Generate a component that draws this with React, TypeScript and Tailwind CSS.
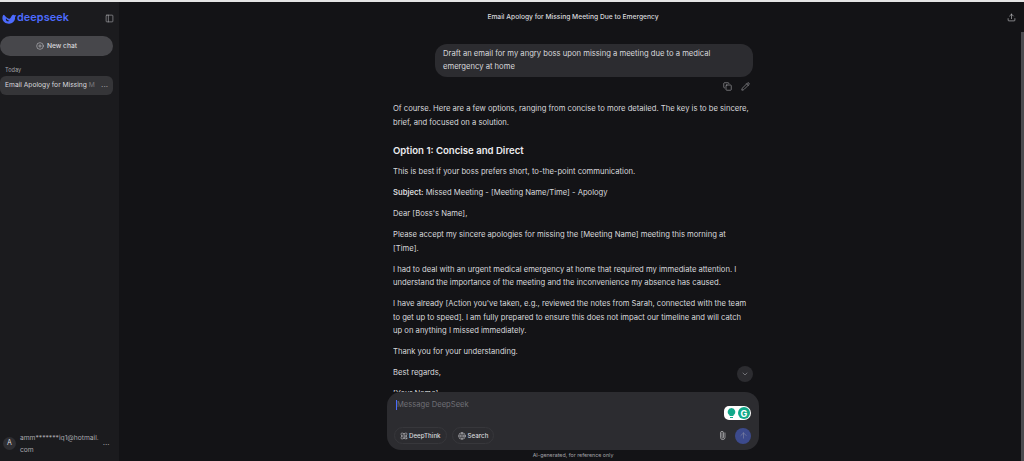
import { ArrowUp, ChevronDown, Copy, Globe, Paperclip, PanelLeft, Pencil, Atom, Upload, CirclePlus } from "lucide-react";

const font = { fontFamily: "Inter, 'Liberation Sans', sans-serif" };

function Whale() {
  return (
    <svg width="15" height="11" viewBox="0 0 30 22" fill="none">
      <path
        d="M28.500 4c-1.300-.5-2 .3-2.700 1-.8-1-1.900-1.500-3.200-1.300-2.600.4-3.700 2.700-4.800 5-1.100 2.300-2.200 3.500-4.300 2.800C10 10.300 7 7 4 3.500c-1.500 0-2.500 1.500-3 4-.8 4.500.8 8.500 4 11 2.700 2.200 6 3 9.500 2.800 6-.4 10.500-4 11.500-9.300.2-1.300.2-2.700 0-3.800 1-.6 2-2 2.500-4.200z"
        fill="#4d6bfe"
      />
      <path d="M8 10.500c2 2.800 4.500 4.700 7 5-2 1.800-5 1.500-6.500-.5-1-1.300-1-3-.5-4.500z" fill="#1b1b1e" />
    </svg>
  );
}

function Sidebar() {
  return (
    <aside className="flex flex-col w-[119px] shrink-0 bg-[#1b1b1e] text-[#d8d8dc]">
      <div className="flex items-center justify-between h-[33px] pl-[2px] pr-[5px]">
        <div className="flex items-center">
          <Whale />
          <span className="text-[10.8px] font-semibold tracking-[0.1px] text-[#4d6bfe] leading-none">deepseek</span>
        </div>
        <PanelLeft size={9} strokeWidth={1.5} className="text-[#b5b5ba]" />
      </div>
      <div className="flex items-center justify-center gap-[3px] h-5 w-[113px] mt-[1px] rounded-[10px] bg-[#47474b] text-[6.7px] font-medium">
        <CirclePlus size={8} strokeWidth={1.5} />
        New chat
      </div>
      <div className="mt-[10px] pl-[5px] text-[5.6px] leading-[9px] text-[#a3a3a8]">Today</div>
      <div className="flex items-center w-[113px] h-[19px] mt-[1px] pl-[5px] pr-[5px] rounded-[6px] bg-[#353538] text-[6.7px]">
        <span className="whitespace-nowrap">
          Email Apology for Missing <span className="opacity-40">M</span>
        </span>
        <span className="ml-auto text-[8px] leading-none text-[#a3a3a8]">···</span>
      </div>
      <div className="flex items-center mt-auto h-[35px] pl-[3px] pr-[10px] gap-[4px]">
        <div className="flex items-center justify-center shrink-0 w-[13px] h-[13px] rounded-full bg-[#2f2f33] text-[7px]">A</div>
        <span className="w-[80px] text-[6.7px] leading-[12px] text-[#a8a8ad]">
          amm*******iq1@hotmail.
          <br />
          com
        </span>
        <span className="ml-auto self-center text-[8px] leading-none text-[#a3a3a8]">···</span>
      </div>
    </aside>
  );
}

function Composer() {
  return (
    <div className="relative flex flex-col justify-between w-[372px] h-[58px] px-[7px] pt-[7px] pb-[6px] rounded-[14px] bg-[#2c2c30]">
      <div className="flex items-center h-3 pl-[2px] text-[7.6px] text-[#6f6f75]">
        <span className="w-[1px] h-[10px] bg-[#4d6bfe]" />
        Message DeepSeek
      </div>
      <div className="absolute right-[8px] top-[14px] flex items-center justify-between w-[27px] h-[14px] pl-[3px] pr-[1px] rounded-l-[5px] rounded-tr-[7px] rounded-br-[7px] bg-white">
        <svg width="9" height="11" viewBox="0 0 9 11" fill="#12a88a">
          <path d="M4.500 0a3.800 3.800 0 0 1 2 7v1H2.500V7a3.800 3.800 0 0 1 2-7zM3 9h3v1H3z" />
        </svg>
        <span className="flex items-center justify-center w-3 h-3 rounded-full bg-[#12a88a] text-[9px] font-bold leading-none text-white">G</span>
      </div>
      <div className="flex items-center justify-between">
        <div className="flex items-center gap-[5px]">
          <div className="flex items-center gap-[1px] h-[17px] px-[5px] rounded-full border border-[#37373b] text-[6.2px] font-medium text-[#d8d8dc]">
            <Atom size={8} strokeWidth={1.5} />
            DeepThink
          </div>
          <div className="flex items-center gap-[2px] h-[17px] px-[5px] rounded-full border border-[#37373b] text-[6.2px] font-medium text-[#d8d8dc]">
            <Globe size={8} strokeWidth={1.5} />
            Search
          </div>
        </div>
        <div className="flex items-center gap-[8px] pr-[1px]">
          <Paperclip size={9} strokeWidth={1.5} className="-rotate-45 text-[#d8d8dc]" />
          <div className="flex items-center justify-center w-4 h-4 rounded-full bg-[#3c4a8c]">
            <ArrowUp size={9} strokeWidth={1.5} className="text-[#8b8fa8]" />
          </div>
        </div>
      </div>
    </div>
  );
}

export default function App() {
  return (
    <div style={font} className="flex flex-col w-[1024px] h-[461px] overflow-hidden bg-[#131316]">
      <div className="h-[2px] shrink-0 bg-[#e4e4e4]" />
      <div className="flex flex-1 min-h-0">
        <Sidebar />
        <main className="relative flex flex-col flex-1 min-w-0 items-center pl-[3px]">
          <header className="flex items-center justify-center shrink-0 w-full h-[30px] text-[6.7px] font-medium text-[#d8d8dc]">
            Email Apology for Missing Meeting Due to Emergency
            <Upload size={9} strokeWidth={1.5} className="absolute right-[8px] top-[11px]" />
          </header>
          <div className="absolute right-0 top-[30px] bottom-0 w-[3px] bg-[#4a4a4e]" />
          <div className="flex-1 min-h-0 overflow-hidden w-[360px] text-[7.65px] leading-[13.6px] text-[#d8d8dc]">
            <div className="ml-[42px] mt-[12px] w-[318px] h-[33px] px-[8px] py-[4px] rounded-[12px] bg-[#2c2c30] leading-[12.6px]">
              Draft an email for my angry boss upon missing a meeting due to a medical emergency at home
            </div>
            <div className="flex justify-end gap-[9px] h-[25px] pt-[5px] pr-[3px] text-[#b5b5ba]">
              <Copy size={9} strokeWidth={1.5} />
              <Pencil size={9} strokeWidth={1.5} />
            </div>
            <div className="flex flex-col gap-[7.4px] pr-[3px]">
              <p>Of course. Here are a few options, ranging from concise to more detailed. The key is to be sincere, brief, and focused on a solution.</p>
              <h3 className="mt-[7px] text-[9.6px] font-semibold leading-[14px] text-[#ececef]">Option 1: Concise and Direct</h3>
              <p>This is best if your boss prefers short, to-the-point communication.</p>
              <p><strong className="font-semibold">Subject:</strong> Missed Meeting - [Meeting Name/Time] - Apology</p>
              <p>Dear [Boss's Name],</p>
              <p>Please accept my sincere apologies for missing the [Meeting Name] meeting this morning at [Time].</p>
              <p>I had to deal with an urgent medical emergency at home that required my immediate attention. I understand the importance of the meeting and the inconvenience my absence has caused.</p>
              <p>I have already [Action you've taken, e.g., reviewed the notes from Sarah, connected with the team to get up to speed]. I am fully prepared to ensure this does not impact our timeline and will catch up on anything I missed immediately.</p>
              <p>Thank you for your understanding.</p>
              <p>Best regards,</p>
              <p>[Your Name]</p>
            </div>
          </div>
          <div className="absolute left-[618px] top-[364px] flex items-center justify-center w-4 h-4 rounded-full bg-[#2c2c30]">
            <ChevronDown size={8} strokeWidth={1.5} className="text-[#b5b5ba]" />
          </div>
          <Composer />
          <div className="flex items-center justify-center shrink-0 h-[11px] pt-[1px] text-[5.3px] text-[#a3a3a8]">AI-generated, for reference only</div>
        </main>
      </div>
    </div>
  );
}
